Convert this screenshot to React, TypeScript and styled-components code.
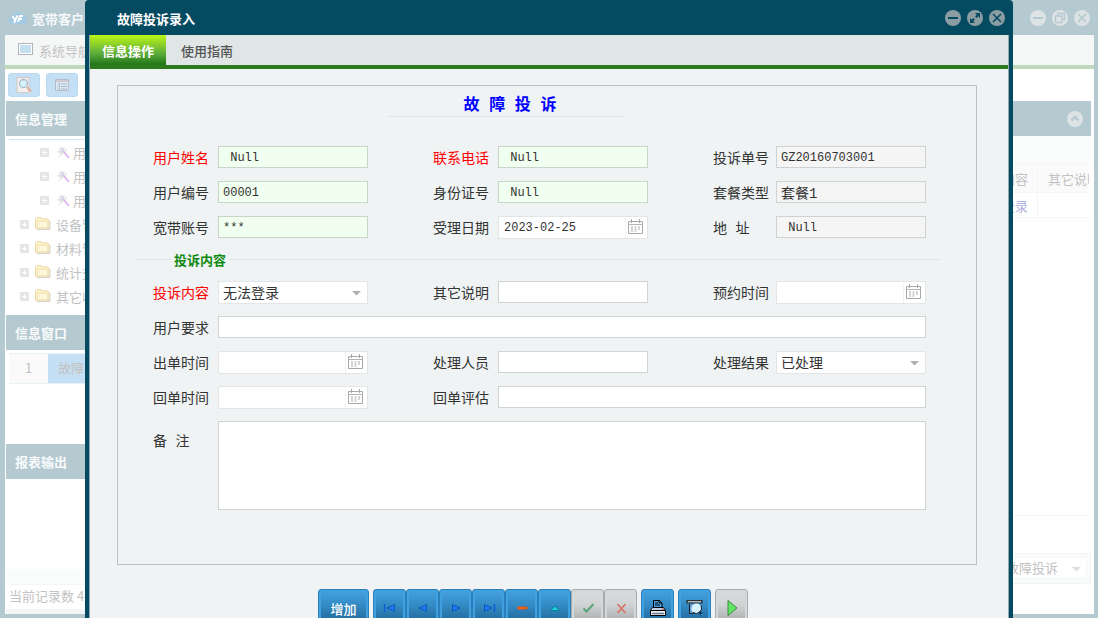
import React from 'react';
import styled, { createGlobalStyle } from 'styled-components';

const GlobalStyle = createGlobalStyle`
  * { box-sizing: border-box; }
  body {
    margin: 0;
    background: #fff;
    overflow: hidden;
    font-family: "Noto Sans CJK SC", sans-serif;
    font-size: 13px;
    color: #333;
  }
  button, input, select, textarea { font: inherit; color: inherit; margin: 0; }
  button { cursor: pointer; }
  h1, h2, ul { margin: 0; padding: 0; font: inherit; }
  svg { display: block; flex: none; }
`;

const Screen = styled.div`
  position: relative;
  height: calc(100vh - 17px);
  margin-right: 1px;
  overflow: hidden;
`;

/* ---------- main window, faded behind the dialog ---------- */

const BackWindow = styled.div`
  display: flex;
  flex-direction: column;
  height: 100%;
  border: solid #b5c9d1;
  border-width: 0 4px 4px 5px;
  color: #c2c2c2;
`;

const TitleBar = styled.header<{ $faded?: boolean }>`
  display: flex;
  align-items: center;
  flex: none;
  height: 35px;
  padding: ${p => (p.$faded ? '0 4px' : '0 4px 0 28px')};
  background: ${p => (p.$faded ? '#b5c9d1' : '#044a61')};
  color: ${p => (p.$faded ? '#f6f9fa' : '#fff')};
  font-weight: bold;
  white-space: nowrap;
`;

const TitleText = styled.h1`
  flex: 1;
  padding: 2px 0 0 5px;
  line-height: 20px;
`;

const DialogTitle = styled.h2`
  flex: 1;
  padding-top: 2px;
  line-height: 20px;
`;

const WindowButtons = styled.div`
  display: flex;
  gap: 6px;
`;

const RoundButton = styled.button`
  width: 16px;
  height: 16px;
  padding: 0;
  border: 0;
  background: none;
`;

const MenuBar = styled.nav<{ $faded?: boolean }>`
  display: flex;
  flex: none;
  height: 34px;
  border-bottom: 4px solid ${p => (p.$faded ? '#c0d8bb' : '#2c7a1d')};
  background: ${p => (p.$faded ? '#f5f7f7' : '#e0e5e6')};
`;

const MenuButton = styled.button`
  display: flex;
  align-items: center;
  gap: 6px;
  padding: 0 13px;
  border: 0;
  background: none;
  white-space: nowrap;
`;

const ToolRow = styled.div`
  display: flex;
  flex: none;
  gap: 6px;
  height: 32px;
  padding: 4px 3px;
`;

const SoftButton = styled.button`
  display: grid;
  place-items: center;
  width: 32px;
  height: 24px;
  padding: 0;
  border: 1px solid #b9d9f0;
  border-radius: 3px;
  background: #c5e0f4;
`;

const Columns = styled.div`
  display: flex;
  flex: 1;
  min-height: 0;
  padding: 0 3px 0 1px;
`;

const Sidebar = styled.aside`
  display: flex;
  flex-direction: column;
  width: 200px;
`;

const PanelHead = styled.div`
  display: flex;
  align-items: center;
  justify-content: space-between;
  flex: none;
  height: 35px;
  padding: 0 8px 0 9px;
  background: #b5c9d1;
  color: #f8fbfc;
  font-weight: bold;
  line-height: 18px;
`;

const Tree = styled.ul`
  flex: none;
  height: 176px;
  margin: 3px 0 0 3px;
  border-top: 1px solid #cfe3f0;
  list-style: none;
`;

const TreeItem = styled.li<{ $depth: number }>`
  display: flex;
  align-items: center;
  gap: ${p => (p.$depth ? 3 : 5)}px;
  height: 24px;
  padding-left: ${p => (p.$depth ? 31 : 11)}px;
  white-space: nowrap;
  svg:first-child { margin-right: ${p => (p.$depth ? 4 : 1)}px; }
`;

const WindowList = styled.div`
  flex: none;
  height: 94px;
  padding: 3px 3px 0;
`;

const ListRow = styled.div`
  display: flex;
  height: 31px;
  border: solid #e6f1f8;
  border-width: 1px 0;
  line-height: 27px;
`;

const RowNumber = styled.span`
  width: 39px;
  background: #fafafa;
  text-align: center;
`;

const RowName = styled.span`
  flex: 1;
  padding-left: 10px;
  background: #c5e0f4;
`;

const Blank = styled.div`
  flex: 1;
  border-bottom: 15px solid #fafcfc;
`;

const GridSpace = styled.div`
  flex: 1;
  margin-bottom: 37px;
  border-bottom: 1px solid #f4f6f6;
`;

const Status = styled.div`
  flex: none;
  height: 30px;
  padding-left: 3px;
  border: solid #f3f6f6;
  border-width: 1px 0 5px;
  line-height: 22px;
`;

const Main = styled.main`
  display: flex;
  flex: 1;
  flex-direction: column;
  min-width: 0;
  background: #fefefe;
`;

const MainBand = styled.div`
  flex: none;
  height: 27px;
  background: #fafcfc;
`;

const GridRow = styled.div<{ $head?: boolean }>`
  display: flex;
  justify-content: flex-end;
  flex: none;
  height: ${p => (p.$head ? 30 : 25)}px;
  margin-right: 2px;
  border: solid #f4f6f6;
  border-width: ${p => (p.$head ? '1px 0' : '0 0 1px')};
  background: ${p => (p.$head ? '#fafafa' : '#fff')};
  color: ${p => (p.$head ? '#c2c2c2' : '#b0b0dd')};
  line-height: ${p => (p.$head ? 30 : 26)}px;
  white-space: nowrap;
  overflow: hidden;
`;

const GridCell = styled.span<{ $last?: boolean }>`
  width: ${p => (p.$last ? 52 : 90)}px;
  padding: ${p => (p.$last ? '0 0 0 10px' : '0 9px 0 0')};
  border-left: 1px solid #f4f6f6;
  text-align: ${p => (p.$last ? 'left' : 'right')};
  overflow: hidden;
`;

const Pager = styled.div`
  display: flex;
  justify-content: flex-end;
  flex: none;
  height: 31px;
  margin-bottom: 30px;
  padding: 3px;
  border: 1px solid #f1f5f5;
  background: #fafcfc;
`;

const SelectBox = styled.div<{ $faded?: boolean }>`
  position: relative;
  flex: 1;
  min-width: 0;
  max-width: ${p => (p.$faded ? '86px' : 'none')};
  height: ${p => (p.$faded ? 22 : 23)}px;
  border: 1px solid ${p => (p.$faded ? '#f6f8f8' : '#e2e6e6')};
  background: #fff;
  svg {
    position: absolute;
    right: ${p => (p.$faded ? 5 : 6)}px;
    top: 9px;
    pointer-events: none;
  }
`;

const Select = styled.select`
  appearance: none;
  width: 100%;
  height: 100%;
  padding: 0 4px 2px;
  border: 0;
  background: none;
  outline: 0;
`;

/* ---------- dialog ---------- */

const Dialog = styled.section`
  position: absolute;
  top: 0;
  bottom: 0;
  left: 85px;
  right: 85px;
  display: flex;
  flex-direction: column;
  border: solid #044a61;
  border-width: 0 4px;
  border-radius: 4px 4px 0 0;
  background: #eff3f4;
  overflow: hidden;
`;

const DialogInner = styled.div`
  display: flex;
  flex: 1;
  flex-direction: column;
  min-height: 0;
  border: solid #93a9b3;
  border-width: 0 1px;
  overflow: hidden;
`;

const Tab = styled.button<{ $active?: boolean }>`
  width: 76px;
  padding: 0;
  border: 0;
  background: ${p => (p.$active ? 'linear-gradient(#bdf516, #5fae3c 60%, #1f7418)' : 'none')};
  color: ${p => (p.$active ? '#fff' : '#555')};
  font-weight: ${p => (p.$active ? 'bold' : '500')};
  &:nth-child(2) { width: 82px; }
`;

const FormPanel = styled.form`
  flex: none;
  min-height: 480px;
  margin: 16px 31px 0 27px;
  border: 1px solid #bcc1c3;
`;

const TitleHolder = styled.div`
  padding-right: 82px;
`;

const FormTitle = styled.h2`
  width: 236px;
  height: 31px;
  margin: 0 auto 29px;
  padding-left: 8px;
  border-bottom: 1px solid #dfe4e5;
  color: #00f;
  font: bold 16px/40px "Liberation Mono", "Noto Sans CJK SC", monospace;
  text-align: center;
`;

const FieldGrid = styled.div`
  display: grid;
  grid-template-columns: minmax(0, 215fr) minmax(0, 215fr) minmax(0, 213fr);
  gap: 13px 65px;
  padding: 0 50px 0 35px;
`;

const Field = styled.div<{ $span?: number; $narrow?: boolean; $tall?: boolean }>`
  display: grid;
  grid-template-columns: ${p => (p.$narrow ? 63 : 65)}px minmax(0, 1fr);
  grid-column: span ${p => p.$span || 1};
  height: ${p => (p.$tall ? 89 : 22)}px;
`;

const Label = styled.label<{ $required?: boolean; $tall?: boolean }>`
  color: ${p => (p.$required ? '#f00' : '#333')};
  font: 14px/26px "Liberation Mono", "Noto Sans CJK SC", monospace;
  padding-top: ${p => (p.$tall ? 8 : 0)}px;
  white-space: nowrap;
`;

const tones = {
  plain: ['#fff', '#d0d4d5'],
  green: ['#f0fff0', '#c9d5ca'],
  grey: ['#f5f5f5', '#cfd2d3'],
};

const TextInput = styled.input<{ $tone: keyof typeof tones; $cjk?: boolean }>`
  width: 100%;
  height: 22px;
  padding: ${p => (p.$cjk ? 0 : 2)}px 4px 0;
  border: 1px solid ${p => tones[p.$tone][1]};
  background: ${p => tones[p.$tone][0]};
  outline: 0;
  font: ${p => (p.$cjk ? 14 : 12)}px/18px "Liberation Mono", "Noto Sans CJK SC", monospace;
`;

const TextArea = styled.textarea`
  width: 100%;
  height: 89px;
  border: 1px solid #cfd3d4;
  background: #fff;
  resize: none;
  outline: 0;
`;

const DateBox = styled.div`
  display: flex;
  height: 23px;
  border: 1px solid #e2e6e6;
  background: #fff;
`;

const DateInput = styled.input`
  flex: 1;
  min-width: 0;
  padding: 0 5px;
  border: 0;
  background: none;
  outline: 0;
  font: 12px/20px "Liberation Mono", monospace;
`;

const DateButton = styled.button`
  width: 22px;
  padding: 0 0 2px 2px;
  border: 0;
  border-left: 1px solid #f2f4f4;
  background: none;
`;

const Separator = styled.div`
  display: flex;
  align-items: center;
  gap: 3px;
  height: 20px;
  margin: 12px 0 11px;
  padding: 0 36px 0 18px;
  color: #128a12;
  font-weight: bold;
  line-height: 20px;
  &::before, &::after {
    content: "";
    width: 35px;
    height: 1px;
    margin-bottom: 2px;
    background: #dfe4e5;
  }
  &::after { flex: 1; }
`;

const Toolbar = styled.div`
  display: flex;
  justify-content: center;
  flex: none;
  gap: 4px;
  padding: 24px 32px 0 0;
`;

const Group = styled.div`
  display: flex;
`;

const ToolButton = styled.button<{ $wide?: boolean; $disabled?: boolean }>`
  display: grid;
  place-items: center;
  width: ${p => (p.$wide ? 51 : 33)}px;
  height: 38px;
  padding: 0;
  border: 1px solid ${p => (p.$disabled ? '#a9acad' : '#2b7fb8')};
  border-radius: 3px;
  background: ${p => (p.$disabled
    ? 'linear-gradient(#d8dcdd, #d0d4d5 40%, #9fa3a4)'
    : 'linear-gradient(#46a2e0, #348cc6 40%, #1c618f)')};
  box-shadow: inset 0 0 0 2px ${p => (p.$disabled ? '#d5d8d9' : '#40a0e0')};
  color: #fff;
  font-weight: 500;
`;

/* ---------- icons ---------- */

type CircleKind = 'min' | 'max' | 'restore' | 'close' | 'up';

const circlePaths: Record<CircleKind, React.ReactNode> = {
  min: <path d="M3 8h10" strokeWidth="2" />,
  max: <><path d="M5 11l2.200-2.200M8.800 7.200L11 5" strokeWidth="2" /><path d="M8 3h5v5zM3 8v5h5z" fill="currentColor" stroke="none" /></>,
  restore: <path d="M6 5.500v-2h6.500v6H10.500M3.500 6h6.500v6.500H3.500z" strokeWidth="1.300" />,
  close: <path d="M4 4l8 8M12 4l-8 8" strokeWidth="1.600" />,
  up: <path d="M4.500 9.500L8 6l3.500 3.500" strokeWidth="2.400" />,
};

const Circle = ({ kind, faded }: { kind: CircleKind; faded?: boolean }) => (
  <svg width="16" height="16" viewBox="0 0 16 16" fill="none" color={faded ? '#b5c9d1' : '#044a61'} stroke="currentColor">
    <circle cx="8" cy="8" r="8" fill={faded ? '#dde2e4' : '#8b9da2'} stroke="none" />
    {circlePaths[kind]}
  </svg>
);

const WindowControls = ({ kinds, faded }: { kinds: [CircleKind, string][]; faded?: boolean }) => (
  <WindowButtons>
    {kinds.map(([kind, name]) => (
      <RoundButton key={kind} type="button" aria-label={name}><Circle kind={kind} faded={faded} /></RoundButton>
    ))}
  </WindowButtons>
);

const Logo = () => (
  <svg width="18" height="16" viewBox="0 0 18 16">
    <path d="M4 14a4 4 0 0 1-1-8A5.500 5.500 0 0 1 13 4a4.500 4.500 0 0 1 1 10z" fill="#a3cae3" />
    <path d="M3.500 6l2.500 4M8.500 5.500L5 13M9 12l2-6h3M10 9h3" stroke="#fff" strokeWidth="1.800" fill="none" />
  </svg>
);

const MonitorIcon = () => (
  <svg width="15" height="14" viewBox="0 0 15 14">
    <rect x="0.500" y="0.500" width="14" height="11" fill="#fff" stroke="#adb5ba" />
    <rect x="2" y="2" width="11" height="8" fill="#c4dfef" />
  </svg>
);

const PreviewIcon = () => (
  <svg width="16" height="16" viewBox="0 0 16 16">
    <path d="M1 .5h12v15H1z" fill="#f4eeee" stroke="#d2c9c9" />
    <circle cx="7.500" cy="6.500" r="4" fill="#d5f0f8" stroke="#a9bfd0" strokeWidth="1.300" />
    <path d="M11 10l4 4.500" stroke="#e0b09c" strokeWidth="2.400" />
  </svg>
);

const ListIcon = () => (
  <svg width="14" height="13" viewBox="0 0 14 13">
    <path d="M.5.500h13v11H.5z" fill="#dcebf5" stroke="#b6bcc9" />
    <path d="M1 2h12" stroke="#cfcbd0" strokeWidth="2" />
    <path d="M2.500 5h1M2.500 7.500h1M2.500 10h1M6 5h6M6 7.500h6M6 10h6" stroke="#a9b6c8" />
    <path d="M4.500 3v8" stroke="#b6bcc9" />
  </svg>
);

const Plus = () => (
  <svg width="9" height="9" viewBox="0 0 9 9">
    <path d="M0 0h9v9H0z" fill="#e4e6e6" />
    <path d="M4.500 2v5M2 4.500h5" stroke="#fff" />
  </svg>
);

const Wand = () => (
  <svg width="14" height="14" viewBox="0 0 14 14">
    <path d="M5 1l1 2 3-1-1 3 2 2-3 1-1 3-2-3-3-1 3-2z" fill="#dfe0e3" />
    <path d="M3 3l1 1M9 5h2M4 10l-1 2" stroke="#d3d5da" />
    <path d="M7 6l6 7" stroke="#dcb4ee" strokeWidth="1.800" />
  </svg>
);

const Folder = () => (
  <svg width="16" height="15" viewBox="0 0 16 15">
    <path d="M.5 11V2L2 .5h4L7.500 2H13l1 1.500v8.500H1.500z" fill="#fdf1c9" stroke="#ead9a9" />
    <path d="M2.500 4.500h10v6h-10z" fill="#fff7dc" stroke="#f3e5b8" />
    <path d="M15 4v8.500H2" stroke="#d5d1c6" fill="none" />
  </svg>
);

const Arrow = ({ faded }: { faded?: boolean }) => (
  <svg width="9" height="5" viewBox="0 0 9 5"><path d="M0 0h9L4.500 4.500z" fill={faded ? '#dadddd' : '#b0b0b0'} /></svg>
);

const CalendarIcon = () => (
  <svg width="15" height="15" viewBox="0 0 15 15" fill="none" stroke="#a8a8a8">
    <path d="M.5 2.500h14v12H.5z" />
    <path d="M0 5.500h15" stroke="#b4b4b4" />
    <path d="M3.500 0v4M11.500 0v4" />
    <path d="M3 8h2M6.500 8h2M10 8h2M3 10h2M6.500 10h2M10 10h2M3 12h2M6.500 12h2" />
  </svg>
);

const blueTri = { fill: '#1a7cf0', stroke: '#0a49b8', strokeWidth: 0.8 };

const toolIcons: Record<string, React.ReactNode> = {
  first: <><path d="M3.500 5v8" stroke="#1058d8" strokeWidth="1.400" /><path d="M13.500 5.500v7L6 9z" {...blueTri} /></>,
  prev: <path d="M12.500 5.500v7L5 9z" {...blueTri} />,
  next: <path d="M5.500 5.500v7L13 9z" {...blueTri} />,
  last: <><path d="M14.500 5v8" stroke="#1058d8" strokeWidth="1.400" /><path d="M4.500 5.500v7L12 9z" {...blueTri} /></>,
  remove: <path d="M4.500 8h9.500v2H4.500z" fill="#ff7a10" stroke="#d2501a" />,
  edit: <path d="M4.500 11.500L9 7l4.500 4.500z" fill="#19d0dc" stroke="#07849c" />,
  ok: <path d="M4.500 9.500L7.500 12.500l7-7.500" fill="none" stroke="#5aa578" strokeWidth="2" />,
  cancel: <path d="M5.500 5l8 9M13.500 5l-8 9" stroke="#dc7468" strokeWidth="1.800" />,
};

const ToolIcon = ({ name }: { name: string }) => (
  <svg width="18" height="18" viewBox="0 0 18 18">{toolIcons[name]}</svg>
);

const PrinterIcon = () => (
  <svg width="18" height="18" viewBox="0 0 18 18">
    <path d="M4.500 8V1.500h6l2.500 2.500v4" fill="#4b9fe0" stroke="#000" />
    <path d="M6 4h3M6 6h5M10 1.500V4h3" stroke="#000" fill="none" />
    <path d="M3.500 8.500h11l2 3v5H1.500v-5z" fill="#e8eef4" stroke="#000" />
    <path d="M2 11.500h14" stroke="#000" />
    <path d="M4 10h10" stroke="#8caac8" />
    <path d="M3 14.500h12" stroke="#6c7c8c" strokeWidth="1.500" />
    <path d="M13 10.300h2" stroke="#e03030" />
  </svg>
);

const SearchPageIcon = () => (
  <svg width="18" height="18" viewBox="0 0 18 18">
    <path d="M1 1.500h15M1 4h15M1 1v3.500M16 1v3.500" stroke="#2c3134" strokeWidth="1.200" />
    <path d="M2 2.700h13" stroke="#dfc6b0" />
    <path d="M3.500 5v9.500H8" stroke="#222" fill="none" />
    <path d="M4 5h9v9H4z" fill="#5da3d8" />
    <circle cx="10.500" cy="9.500" r="4.500" fill="#d6f2ff" stroke="#eaf8ff" strokeWidth="1.200" />
    <path d="M15 6.500a5.500 5.500 0 0 1-8 7" stroke="#123" fill="none" />
    <path d="M13.500 13l3 3" stroke="#0c3050" strokeWidth="2.500" />
    <circle cx="16" cy="15.500" r="1" fill="#38a8f0" />
  </svg>
);

const PlayIcon = () => (
  <svg width="18" height="18" viewBox="0 0 18 18"><path d="M5 1.500v15L14 9z" fill="#62e562" stroke="#3a8a3e" /></svg>
);

/* ---------- form parts ---------- */

const SelectLarge = styled(Select)`
  padding-bottom: 3px;
  font-size: 14px;
`;

type FieldProps = {
  id: string; label: string; kind?: 'text' | 'date' | 'select' | 'area';
  value?: string; tone?: keyof typeof tones; required?: boolean; span?: number; narrow?: boolean; cjk?: boolean;
};

const FormField = ({ id, label, kind = 'text', value = '', tone = 'plain', required, span, narrow, cjk }: FieldProps) => (
  <Field $span={span} $narrow={narrow} $tall={kind === 'area'}>
    <Label htmlFor={id} $required={required} $tall={kind === 'area'}>{label}</Label>
    {kind === 'text' && <TextInput id={id} $tone={tone} $cjk={cjk} defaultValue={value} readOnly={tone === 'grey'} />}
    {kind === 'area' && <TextArea id={id} />}
    {kind === 'date' && (
      <DateBox>
        <DateInput id={id} defaultValue={value} />
        <DateButton type="button" aria-label="选择日期"><CalendarIcon /></DateButton>
      </DateBox>
    )}
    {kind === 'select' && (
      <SelectBox>
        <SelectLarge id={id}><option>{value}</option></SelectLarge>
        <Arrow />
      </SelectBox>
    )}
  </Field>
);

const tools: [string, string][] = [
  ['first', '首条'], ['prev', '上一条'], ['next', '下一条'], ['last', '末条'],
  ['remove', '删除'], ['edit', '修改'], ['ok', '保存'], ['cancel', '取消'],
];

const App = () => (
  <>
    <GlobalStyle />
    <Screen>
      <BackWindow>
        <TitleBar $faded>
          <Logo />
          <TitleText>宽带客户管</TitleText>
          <WindowControls faded kinds={[['min', '最小化'], ['restore', '还原'], ['close', '关闭']]} />
        </TitleBar>
        <MenuBar $faded>
          <MenuButton type="button"><MonitorIcon />系统导航</MenuButton>
        </MenuBar>
        <ToolRow>
          <SoftButton type="button" aria-label="预览"><PreviewIcon /></SoftButton>
          <SoftButton type="button" aria-label="列表"><ListIcon /></SoftButton>
        </ToolRow>
        <Columns>
          <Sidebar>
            <PanelHead>信息管理</PanelHead>
            <Tree>
              {[0, 1, 2].map(i => <TreeItem key={i} $depth={1}><Plus /><Wand />用户</TreeItem>)}
              {['设备管理', '材料管理', '统计查询', '其它收'].map(name => (
                <TreeItem key={name} $depth={0}><Plus /><Folder />{name}</TreeItem>
              ))}
            </Tree>
            <PanelHead>信息窗口</PanelHead>
            <WindowList>
              <ListRow><RowNumber>1</RowNumber><RowName>故障投诉</RowName></ListRow>
            </WindowList>
            <PanelHead>报表输出</PanelHead>
            <Blank />
            <Status>当前记录数 4</Status>
          </Sidebar>
          <Main>
            <PanelHead>
              <span />
              <RoundButton type="button" aria-label="收起"><Circle kind="up" faded /></RoundButton>
            </PanelHead>
            <MainBand />
            <GridRow $head><GridCell>内容</GridCell><GridCell $last>其它说明</GridCell></GridRow>
            <GridRow><GridCell>无法登录</GridCell><GridCell $last /></GridRow>
            <GridSpace />
            <Pager>
              <SelectBox $faded>
                <Select aria-label="表单"><option>故障投诉</option></Select>
                <Arrow faded />
              </SelectBox>
            </Pager>
          </Main>
        </Columns>
      </BackWindow>

      <Dialog role="dialog" aria-label="故障投诉录入">
        <TitleBar>
          <DialogTitle>故障投诉录入</DialogTitle>
          <WindowControls kinds={[['min', '最小化'], ['max', '最大化'], ['close', '关闭']]} />
        </TitleBar>
        <DialogInner>
          <MenuBar>
            <Tab type="button" $active>信息操作</Tab>
            <Tab type="button">使用指南</Tab>
          </MenuBar>
          <FormPanel>
            <TitleHolder><FormTitle>故 障 投 诉</FormTitle></TitleHolder>
            <FieldGrid>
              <FormField id="name" label="用户姓名" value=" Null" tone="green" required />
              <FormField id="phone" label="联系电话" value=" Null" tone="green" required />
              <FormField id="ticket" label="投诉单号" value="GZ20160703001" tone="grey" narrow />
              <FormField id="userNo" label="用户编号" value="00001" tone="green" />
              <FormField id="idCard" label="身份证号" value=" Null" tone="green" />
              <FormField id="plan" label="套餐类型" value="套餐1" tone="grey" narrow cjk />
              <FormField id="account" label="宽带账号" value="***" tone="green" />
              <FormField id="accepted" label="受理日期" kind="date" value="2023-02-25" />
              <FormField id="address" label="地 址" value=" Null" tone="grey" narrow />
            </FieldGrid>
            <Separator>投诉内容</Separator>
            <FieldGrid>
              <FormField id="content" label="投诉内容" kind="select" value="无法登录" required />
              <FormField id="other" label="其它说明" />
              <FormField id="booked" label="预约时间" kind="date" narrow />
              <FormField id="request" label="用户要求" span={3} />
              <FormField id="issued" label="出单时间" kind="date" />
              <FormField id="staff" label="处理人员" />
              <FormField id="result" label="处理结果" kind="select" value="已处理" narrow />
              <FormField id="returned" label="回单时间" kind="date" />
              <FormField id="review" label="回单评估" span={2} />
              <FormField id="remark" label="备 注" kind="area" span={3} />
            </FieldGrid>
          </FormPanel>
          <Toolbar>
            <ToolButton type="button" $wide>增加</ToolButton>
            <Group>
              {tools.map(([name, title]) => (
                <ToolButton key={name} type="button" aria-label={title} $disabled={name === 'ok' || name === 'cancel'}>
                  <ToolIcon name={name} />
                </ToolButton>
              ))}
            </Group>
            <ToolButton type="button" aria-label="打印"><PrinterIcon /></ToolButton>
            <ToolButton type="button" aria-label="查询"><SearchPageIcon /></ToolButton>
            <ToolButton type="button" aria-label="执行" $disabled><PlayIcon /></ToolButton>
          </Toolbar>
        </DialogInner>
      </Dialog>
    </Screen>
  </>
);

export default App;
